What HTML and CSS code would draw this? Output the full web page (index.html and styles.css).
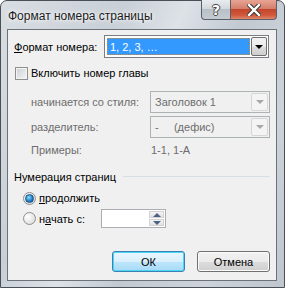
FILE: index.html
```html
<!DOCTYPE html>
<html>
<head>
<meta charset="utf-8">
<link rel="stylesheet" href="styles.css">
</head>
<body>
<div class="window">
  <div class="titlebar">
    <div class="title">Формат номера страницы</div>
    <div class="tbtns">
      <div class="tbtn help">?</div>
      <div class="tbtn close">
        <svg width="14" height="12" viewBox="0 0 14 12"><path d="M2 1 L12 11 M12 1 L2 11" stroke="#3a3a3a" stroke-width="4.4" stroke-linecap="square"/><path d="M2 1 L12 11 M12 1 L2 11" stroke="#fff" stroke-width="2.4" stroke-linecap="square"/></svg>
      </div>
    </div>
  </div>
  <div class="client">
    <div class="row r1">
      <span class="lbl1"><u>Ф</u>ормат номера:</span>
      <div class="combo active">
        <div class="cval"><span class="sel">1, 2, 3, …</span></div>
        <div class="cbtn"><span class="tri"></span></div>
      </div>
    </div>
    <div class="row r2">
      <span class="check"></span>
      <span class="ctext">Включить номер главы</span>
    </div>
    <div class="row r3 dis">
      <span class="lbl2">начинается со стиля:</span>
      <div class="combo disabled">
        <div class="cval">Заголовок 1</div>
        <div class="cbtn"><span class="tri"></span></div>
      </div>
    </div>
    <div class="row r4 dis">
      <span class="lbl2">разделитель:</span>
      <div class="combo disabled">
        <div class="cval">-&nbsp;&nbsp;&nbsp;&nbsp;&nbsp;(дефис)</div>
        <div class="cbtn"><span class="tri"></span></div>
      </div>
    </div>
    <div class="row r5 dis">
      <span class="lbl2">Примеры:</span>
      <span class="ex">1-1, 1-А</span>
    </div>
    <div class="row grp">
      <span class="gtext">Нумерация страниц</span>
      <span class="gline"></span>
    </div>
    <div class="row rad1">
      <span class="radio on"></span>
      <span class="rtext"><u>п</u>родолжить</span>
    </div>
    <div class="row rad2">
      <span class="radio"></span>
      <span class="rtext rt2">н<u>а</u>чать с:</span>
      <div class="spin">
        <div class="sfield"></div>
        <div class="sbtns">
          <div class="sb"><span class="up"></span></div>
          <div class="sb"><span class="dn"></span></div>
        </div>
      </div>
    </div>
    <div class="row btns">
      <div class="btn def">ОК</div>
      <div class="btn">Отмена</div>
    </div>
  </div>
</div>
</body>
</html>
```
FILE: styles.css
```css
* { box-sizing: border-box; }
html, body { margin: 0; padding: 0; }
body {
  width: 285px; height: 288px; overflow: hidden;
  font-family: "Liberation Sans", Arial, sans-serif;
  font-size: 11px; color: #000;
  background: #fff;
  white-space: nowrap;
}
.window {
  width: 285px; height: 288px;
  border: 1px solid #4a4f55;
  border-radius: 7px 7px 0 0;
  background: linear-gradient(115deg, #d9dee3 0%, #c8cfd6 30%, #dde2e7 45%, #c2c9d1 60%, #cdd3d9 80%, #bfc6ce 100%);
  display: flex; flex-direction: column;
  padding: 0 7px 6px 6px;
}
.titlebar {
  height: 28px; display: flex; justify-content: space-between; align-items: flex-start;
}
.title {
  margin-top: 8px; margin-left: 1px;
  font-size: 12px; color: #1b1b1b;
  text-shadow: 0 0 6px #fff, 0 0 3px #fff;
}
.tbtns { display: flex; margin-top: -1px; }
.tbtn {
  height: 20px; border: 1px solid #5a6068; border-top: none;
  display: flex; align-items: center; justify-content: center;
}
.help {
  width: 29px; border-right: none; border-radius: 0 0 0 4px;
  background: linear-gradient(#e9ecef 0%, #d3d8dd 45%, #b9c0c7 50%, #c4cad0 100%);
  color: #fff; font-weight: bold; font-size: 14px; font-family: "DejaVu Sans", sans-serif;
  text-shadow: -1px 0 #444, 1px 0 #444, 0 -1px #444, 0 1px #444;
}
.close {
  width: 47px; border-radius: 0 0 4px 0;
  background: linear-gradient(#e8a493 0%, #d47f6c 45%, #c2462c 50%, #d2583c 80%, #e0876c 100%);
}
.client {
  flex: 1;
  background: #f0f0f0;
  border: 1px solid #6c7279;
  padding: 5px 6px 0 6px;
  display: flex; flex-direction: column;
}
.row { display: flex; align-items: center; }
.r1 { height: 23px; }
.lbl1 { width: 90px; padding-top: 1px; }
.combo { display: flex; height: 100%; border: 1px solid #7a7e84; background: #fff; }
.active { width: 165px; padding: 1px; }
.active .cval { flex: 1; padding: 1px; }
.sel {
  display: flex; align-items: center; height: 100%;
  background: #3399ff; color: #fff; padding-left: 3px;
  outline: 1px dotted #d48a30; outline-offset: -1px;
}
.cbtn {
  width: 16px; border: 1px solid #707070; border-radius: 2px;
  background: linear-gradient(#f2f2f2 0%, #ebebeb 50%, #dddddd 51%, #cfcfcf 100%);
  display: flex; align-items: center; justify-content: center;
}
.tri { width: 0; height: 0; border-left: 4px solid transparent; border-right: 4px solid transparent; border-top: 4px solid #000; }
.r2 { height: 18px; margin-top: 6px; padding-left: 1px; }
.check {
  width: 13px; height: 13px; border: 1px solid #8e8f8f;
  background: linear-gradient(135deg, #cbcfd5 0%, #f6f6f6 100%);
  box-shadow: inset 0 0 0 1px #f4f4f4;
}
.ctext { margin-left: 3px; }
.dis { color: #6d6d6d; }
.r3 { height: 22px; margin-top: 9px; }
.r4 { height: 22px; margin-top: 3px; }
.lbl2 { width: 136px; padding-left: 17px; }
.disabled { width: 120px; background: #f0f0f0; border-color: #adb2b5; padding: 1px; }
.disabled .cval { flex: 1; display: flex; align-items: center; padding-left: 3px; color: #6d6d6d; }
.disabled .cbtn { border-color: #d6d6d6; background: #f4f4f4; width: 17px; }
.disabled .tri { border-top-color: #a8a8a8; }
.r5 { height: 18px; margin-top: 3px; }
.ex { padding-left: 1px; }
.grp { height: 18px; margin-top: 9px; }
.gtext { color: #000; }
.gline { flex: 1; height: 1px; background: #d5dfe5; margin-left: 7px; margin-top: -2px; }
.rad1 { height: 18px; margin-top: 3px; padding-left: 9px; }
.rad2 { height: 19px; margin-top: 2px; padding-left: 9px; }
.radio {
  width: 13px; height: 13px; border-radius: 50%;
  border: 1px solid #8e8f8f;
  background: radial-gradient(circle at 35% 35%, #ffffff 0%, #e6e6e6 60%, #cfd1d4 100%);
  display: flex; align-items: center; justify-content: center;
}
.radio.on::after {
  content: ""; width: 7px; height: 7px; border-radius: 50%;
  background: radial-gradient(circle at 40% 35%, #8ee0ff 0%, #2a8ad4 50%, #0d4a8a 100%);
  border: 1px solid #1a4f80;
}
.rtext { margin-left: 3px; }
.rt2 { width: 62px; }
.spin { width: 65px; height: 19px; display: flex; border: 1px solid #abadb3; background: #fff; padding: 1px; }
.sfield { flex: 1; }
.sbtns { width: 15px; display: flex; flex-direction: column; gap: 1px; }
.sb { flex: 1; background: linear-gradient(#f4f4f4, #e2e2e2); border: 1px solid #d2d2d2; display: flex; align-items: center; justify-content: center; }
.up { width: 0; height: 0; border-left: 4px solid transparent; border-right: 4px solid transparent; border-bottom: 4px solid #4d6185; }
.dn { width: 0; height: 0; border-left: 4px solid transparent; border-right: 4px solid transparent; border-top: 4px solid #4d6185; }
.btns { height: 21px; margin-top: 23px; justify-content: flex-end; gap: 12px; }
.btn {
  width: 73px; height: 21px; border: 1px solid #707070; border-radius: 3px;
  background: linear-gradient(#f2f2f2 0%, #ebebeb 50%, #dddddd 51%, #cfcfcf 100%);
  box-shadow: inset 0 0 0 1px #fbfbfb;
  display: flex; align-items: center; justify-content: center;
}
.btn.def {
  border-color: #3c7fb1;
  background: linear-gradient(#eaf6fd 0%, #d9f0fc 50%, #bee6fd 51%, #a7d9f5 100%);
  box-shadow: inset 0 0 0 1px #48d7f6;
}
```
